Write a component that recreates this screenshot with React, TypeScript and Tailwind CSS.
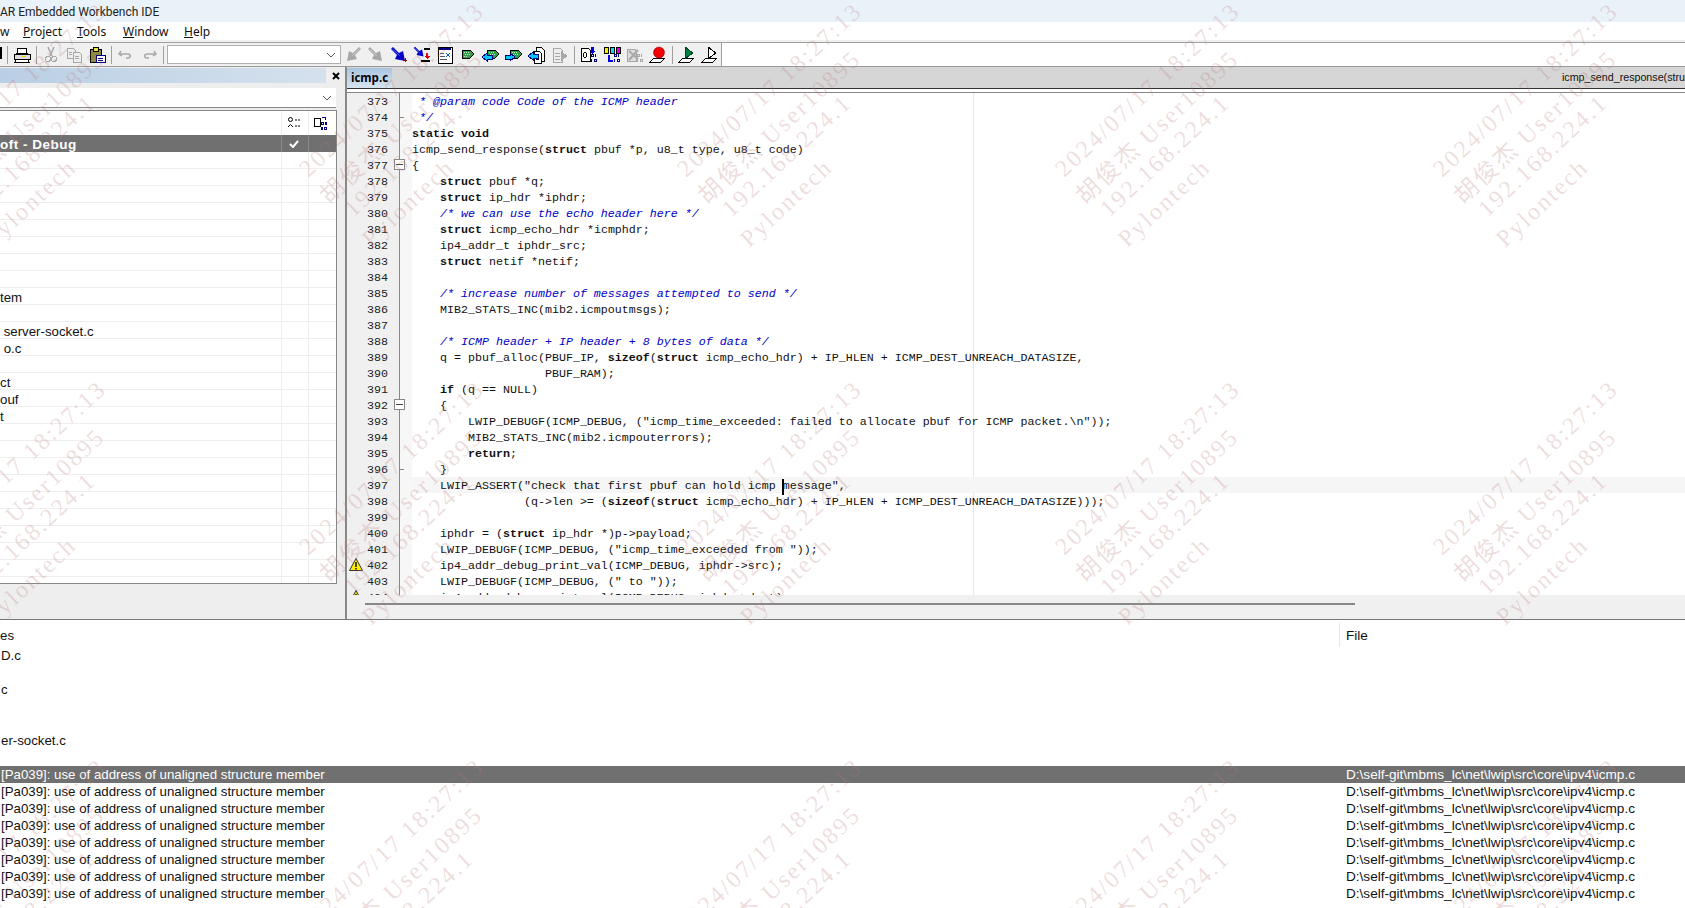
import { ReactNode } from 'react';

const mono = "font-['Liberation_Mono',monospace] text-[11.67px] leading-[18px]";
const ui = "font-['Noto_Sans',sans-serif] text-[12px]";
const listFont = "font-['Liberation_Sans',sans-serif] text-[13.28px]";

const code = [
  ' * @param code Code of the ICMP header',
  ' */',
  'static void',
  'icmp_send_response(struct pbuf *p, u8_t type, u8_t code)',
  '{',
  '    struct pbuf *q;',
  '    struct ip_hdr *iphdr;',
  '    /* we can use the echo header here */',
  '    struct icmp_echo_hdr *icmphdr;',
  '    ip4_addr_t iphdr_src;',
  '    struct netif *netif;',
  '',
  '    /* increase number of messages attempted to send */',
  '    MIB2_STATS_INC(mib2.icmpoutmsgs);',
  '',
  '    /* ICMP header + IP header + 8 bytes of data */',
  '    q = pbuf_alloc(PBUF_IP, sizeof(struct icmp_echo_hdr) + IP_HLEN + ICMP_DEST_UNREACH_DATASIZE,',
  '                   PBUF_RAM);',
  '    if (q == NULL)',
  '    {',
  '        LWIP_DEBUGF(ICMP_DEBUG, ("icmp_time_exceeded: failed to allocate pbuf for ICMP packet.\\n"));',
  '        MIB2_STATS_INC(mib2.icmpouterrors);',
  '        return;',
  '    }',
  '    LWIP_ASSERT("check that first pbuf can hold icmp message",',
  '                (q->len >= (sizeof(struct icmp_echo_hdr) + IP_HLEN + ICMP_DEST_UNREACH_DATASIZE)));',
  '',
  '    iphdr = (struct ip_hdr *)p->payload;',
  '    LWIP_DEBUGF(ICMP_DEBUG, ("icmp_time_exceeded from "));',
  '    ip4_addr_debug_print_val(ICMP_DEBUG, iphdr->src);',
  '    LWIP_DEBUGF(ICMP_DEBUG, (" to "));',
  '    ip4_addr_debug_print_val(ICMP_DEBUG, iphdr->dest);',
];

const treeRows: Record<number, string> = {
  9: 'tem',
  11: ' server-socket.c',
  12: ' o.c',
  14: 'ct',
  15: 'ouf',
  16: 't',
};

const msgTop = ['D.c', '', 'c', '', '', 'er-socket.c', ''];
const message = '[Pa039]: use of address of unaligned structure member';
const path = 'D:\\self-git\\mbms_lc\\net\\lwip\\src\\core\\ipv4\\icmp.c';

function Icon({ children }: { children: ReactNode }) {
  return (
    <div className="flex h-full w-[23px] shrink-0 items-center justify-center">
      <svg width="18" height="18" viewBox="0 0 18 18" shapeRendering="crispEdges">
        {children}
      </svg>
    </div>
  );
}

function Sep({ w }: { w: string }) {
  return (
    <div className={`flex h-full shrink-0 items-center justify-center ${w}`}>
      <div className="h-[18px] w-px bg-[#a0a0a0]" />
    </div>
  );
}

// narrow end top-left, wide head bottom-right
function Torch({ color, light, flip }: { color: string; light: string; flip?: boolean }) {
  return (
    <g transform={flip ? 'translate(18 0) scale(-1 1)' : undefined} shapeRendering="auto">
      <path d="M1 3 L3 1 L9 7 L13 5 L15 15 L5 13 L7 9 Z" fill={color} />
      <path d="M2.5 3 L9.5 9.5" stroke={light} strokeWidth="1" fill="none" />
    </g>
  );
}

function Tag({ x = 5 }: { x?: number }) {
  return (
    <g transform={`translate(${x} 4)`}>
      <path d="M0 0 H8 L12 4 L8 8 H0 Z" fill="#2e9e4a" stroke="#000" />
      <path d="M2 2h1v1h-1zM4 2h1v1h-1zM6 2h1v1h-1zM3 4h1v1h-1zM5 4h1v1h-1zM7 4h1v1h-1zM2 6h1v1h-1zM4 6h1v1h-1z" fill="#c8f0c8" />
    </g>
  );
}

function ArrowL({ y = 7 }: { y?: number }) {
  return <path transform={`translate(0 ${y})`} d="M0 4 L5 0 V2 H10 V6 H5 V8 Z" fill="#00c8ff" stroke="#000080" />;
}

function ArrowR({ y = 7 }: { y?: number }) {
  return <path transform={`translate(0 ${y})`} d="M10 4 L5 0 V2 H0 V6 H5 V8 Z" fill="#00c8ff" stroke="#000080" />;
}

function Bits({ color = '#000080' }: { color?: string }) {
  return (
    <g fill="none" stroke={color}>
      <path d="M11.5 8.5h2v2h-2zM15.5 8v3M11.5 13v3M14.5 13.5h2v2h-2z" />
    </g>
  );
}

function Flag({ children }: { children: ReactNode }) {
  return (
    <g>
      <path d="M5 12 L1 16 H12 L16 12 Z" fill="#fff" stroke="#000" />
      {children}
    </g>
  );
}

function Toolbar() {
  const g = '#a8a8a8';
  return (
    <div className="flex h-6 shrink-0 border-t border-[#a0a0a0] bg-white">
      <div className="flex h-full w-[722px] shrink-0 border-r border-[#a0a0a0] bg-[#f0f0f0]">
        <div className="relative h-full w-[5px] shrink-0">
          <div className="absolute top-1 left-0 h-3 w-0.5 bg-black" />
        </div>
        <Sep w="w-[5px]" />
        <Icon>
          <path d="M5 2h8l1 5H4z" fill="#fff" stroke="#000" />
          <path d="M1 8h16v5H1z" fill="#ddd" stroke="#000" />
          <path d="M8 10h5v1H8z" fill="#e8d800" />
          <path d="M3 13h12l1 3H2z" fill="#fff" stroke="#000" />
        </Icon>
        <Sep w="w-[6px]" />
        <Icon>
          <path d="M6 1 L10 10 M12 1 L8 10" stroke={g} strokeWidth="1.5" fill="none" shapeRendering="auto" />
          <circle cx="6" cy="13" r="2.5" stroke={g} fill="none" />
          <circle cx="12" cy="13" r="2.5" stroke={g} fill="none" />
        </Icon>
        <Icon>
          <path d="M2 2h6l2 2v8H2z" fill="#eee" stroke={g} />
          <path d="M8 6h6l2 2v8H8z" fill="#eee" stroke={g} />
          <path d="M10 10h4M10 12h4M4 6h3M4 8h3" stroke={g} />
        </Icon>
        <Icon>
          <path d="M2 3h11v13H2z" fill="#8c8a3c" stroke="#000" />
          <path d="M5 1h5v4H5z" fill="#e8e040" stroke="#000" />
          <path d="M8 9h9v7H8z" fill="#fff" stroke="#000080" />
          <path d="M10 12h5v1h-5zM10 14h5v1h-5z" fill="#000080" />
        </Icon>
        <Sep w="w-[6px]" />
        <Icon>
          <path d="M4 5 L2 8 L5 10 M3 8 H11 C14 8 14 12 11 12 H9" stroke={g} strokeWidth="1.5" fill="none" shapeRendering="auto" />
        </Icon>
        <Icon>
          <path d="M14 5 L16 8 L13 10 M15 8 H7 C4 8 4 12 7 12 H9" stroke={g} strokeWidth="1.5" fill="none" shapeRendering="auto" />
        </Icon>
        <Sep w="w-[7px]" />
        <div className="my-0.5 flex w-[174px] shrink-0 items-center justify-end border border-[#b0b0b0] bg-white pr-1">
          <svg width="10" height="6" viewBox="0 0 10 6">
            <path d="M1 1 L5 5 L9 1" stroke="#555" fill="none" />
          </svg>
        </div>
        <Icon><Torch color="#a8a8a8" light="#d0d0d0" flip /></Icon>
        <Icon><Torch color="#a8a8a8" light="#d0d0d0" /></Icon>
        <Icon>
          <Torch color="#0000c8" light="#5070ff" />
          <path d="M13 14h4M15 12v4" stroke="#a00000" />
        </Icon>
        <Icon>
          <g transform="scale(.7)"><Torch color="#0000c8" light="#5070ff" /></g>
          <path d="M11 3h6M8 15h9" stroke="#000" strokeWidth="2" />
          <path d="M13 7v3h-2l3 3 3-3h-2V7z" fill="#e00000" />
        </Icon>
        <Icon>
          <path d="M2 1h14v16H2z" fill="#fff" stroke="#000" />
          <path d="M3 2h12v2H3z" fill="#000080" />
          <path d="M4 7h4M4 10h5M4 13h7" stroke="#555" />
          <path d="M10 7 L14 11 M14 7 L10 11" stroke="#0060d0" />
        </Icon>
        <Icon><Tag x={3} /></Icon>
        <Icon>
          <Tag />
          <ArrowL />
        </Icon>
        <Icon>
          <Tag />
          <ArrowR />
        </Icon>
        <Icon>
          <path d="M8 1h5l3 3v11H8z" fill="#fff" stroke="#000" />
          <path d="M6 5h5l2 2v10H6z" fill="#fff" stroke="#000" />
          <path d="M8 9h3M8 11h3M8 13h3" stroke="#000" />
          <ArrowL y={6} />
        </Icon>
        <Icon>
          <path d="M2 2h7l2 2v12H2z" fill="#eee" stroke={g} />
          <path d="M4 7h5M4 10h5M4 13h5" stroke={g} />
          <path d="M10 5 L17 10 L10 15 Z" fill={g} />
        </Icon>
        <Sep w="w-[6px]" />
        <Icon>
          <path d="M1 2h7l2 2v11H1z" fill="#fff" stroke="#000" />
          <path d="M3 7h1v4h-1zM6 7h1v4h-1zM4 6h2v1H4zM4 11h2v1H4z" fill="#000" />
          <path d="M10 1h3v5h3l-4 4-4-4h2z" fill="#0000e0" transform="scale(.8) translate(4 0)" />
          <Bits />
        </Icon>
        <Icon>
          <path d="M1 1h4v6H1z" fill="#f0f000" stroke="#000" />
          <path d="M7 1h4v6H7z" fill="#00e0e0" stroke="#000" />
          <path d="M13 1h4v6h-4z" fill="#e000e0" stroke="#000" />
          <path d="M6 9v6h4" stroke="#0000e0" fill="none" strokeWidth="2" />
          <Bits />
        </Icon>
        <Icon>
          <path d="M1 3h8l1 2v10H1z" fill="#ddd" stroke={g} />
          <path d="M3 5 L12 13 M12 4 L3 14" stroke={g} strokeWidth="2" shapeRendering="auto" />
          <Bits color={g} />
        </Icon>
        <Icon>
          <Flag>
            <circle cx="10" cy="6.5" r="5.5" fill="#f00000" stroke="#800000" strokeWidth="0.5" shapeRendering="auto" />
          </Flag>
        </Icon>
        <Sep w="w-[6px]" />
        <Icon>
          <Flag>
            <path d="M7 1 L15 7 L7 13 Z" fill="#008040" stroke="#004020" />
          </Flag>
        </Icon>
        <Icon>
          <Flag>
            <path d="M7 1 L15 7 L7 13 Z" fill="#fff" stroke="#000" />
          </Flag>
        </Icon>
      </div>
    </div>
  );
}

function TreeRow({ text, selected }: { text?: string; selected?: boolean }) {
  return (
    <div className={`flex h-[17px] shrink-0 leading-[19px] ${selected ? 'bg-[#707070]' : 'border-b border-[#eeeeee]'}`}>
      <div className={`w-[281px] shrink-0 overflow-hidden whitespace-pre ${selected ? "text-[13.5px] font-bold tracking-[0.5px] text-white" : 'text-[#111]'}`}>
        {text}
      </div>
      <div className={`flex w-[27px] shrink-0 items-center justify-center border-l pr-[3px] ${selected ? 'border-[#8c8c8c]' : 'border-[#eeeeee]'}`}>
        {selected && (
          <svg width="10" height="8" viewBox="0 0 10 8">
            <path d="M1 4 L4 7 L9 1" stroke="#fff" strokeWidth="2" fill="none" />
          </svg>
        )}
      </div>
      <div className={`flex-1 border-l ${selected ? 'border-[#8c8c8c]' : 'border-[#eeeeee]'}`} />
    </div>
  );
}

function LeftPanel() {
  return (
    <div className="flex w-[345px] shrink-0 flex-col bg-[#eeeeee]">
      <div className="mt-px flex h-[15px] shrink-0">
        <div className="w-[326px] bg-gradient-to-r from-[#bacfe5] to-[#d5e1ed]" />
        <div className="flex flex-1 items-center justify-center">
          <svg width="8" height="8" viewBox="0 0 8 8">
            <path d="M1 1 L7 7 M7 1 L1 7" stroke="#000" strokeWidth="2" />
          </svg>
        </div>
      </div>
      <div className="mt-[5px] flex h-5 w-[336px] shrink-0 items-center justify-end border-b border-[#888] bg-white pr-1">
        <svg width="10" height="6" viewBox="0 0 10 6">
          <path d="M1 1 L5 5 L9 1" stroke="#555" fill="none" />
        </svg>
      </div>
      <div className={`mt-0.5 flex h-[474px] w-[337px] shrink-0 flex-col overflow-hidden border-t border-r border-b border-[#888] bg-white ${listFont}`}>
        <div className="flex h-6 shrink-0">
          <div className="w-[281px]" />
          <div className="flex w-[27px] items-center justify-center border-l border-[#eeeeee] pr-[3px]">
            <svg width="14" height="14" viewBox="0 0 14 14">
              <circle cx="3.5" cy="3.5" r="2" fill="none" stroke="#000" />
              <path d="M8 4h5M8 10h5" stroke="#000" strokeDasharray="2 1" />
              <path d="M1 11 L3.5 8.5 L6 11" stroke="#000" fill="none" />
            </svg>
          </div>
          <div className="flex flex-1 items-center border-l border-[#eeeeee] pl-1">
            <svg width="14" height="14" viewBox="0 0 14 14" shapeRendering="crispEdges">
              <path d="M1 2h6v8H1z" fill="#fff" stroke="#000" />
              <path d="M9 1h3M12 1v3" stroke="#0000a0" />
              <path d="M8 6h2v2H8zM12 6h1v2h-1zM8 11h1v2H8zM11 11h2v2h-2z" fill="none" stroke="#000080" />
            </svg>
          </div>
        </div>
        <TreeRow text="oft - Debug" selected />
        {Array.from({ length: 25 }, (_, i) => (
          <TreeRow key={i} text={treeRows[i + 1]} />
        ))}
        <div className="flex flex-1">
          <div className="w-[281px]" />
          <div className="w-[27px] border-l border-[#eeeeee]" />
          <div className="flex-1 border-l border-[#eeeeee]" />
        </div>
      </div>
    </div>
  );
}

function Warn() {
  return (
    <svg width="14" height="13" viewBox="0 0 14 13">
      <path d="M7 0.5 L13.5 12.5 H0.5 Z" fill="#ffee00" stroke="#333" />
      <path d="M6.3 4h1.4v5H6.3zM6.3 10h1.4v1.4H6.3z" fill="#000" />
    </svg>
  );
}

function GutterRow({ n }: { n: number }) {
  return (
    <div className="relative h-4 shrink-0 pr-[11px] text-right text-[#222]">
      {(n === 402 || n === 404) && (
        <div className="absolute top-px left-0.5">
          <Warn />
        </div>
      )}
      {n}
      {(n === 377 || n === 392) && (
        <div className="absolute top-[2px] right-[-6px] z-10 flex h-[11px] w-[11px] items-center justify-center border border-[#888] bg-white">
          <div className="h-px w-[7px] bg-[#444]" />
        </div>
      )}
      {(n === 374 || n === 396) && <div className="absolute top-2 right-[-5px] z-10 h-px w-[5px] bg-[#888]" />}
    </div>
  );
}

function CodeLine({ text, active }: { text: string; active: boolean }) {
  const trimmed = text.trim();
  const comment = trimmed.startsWith('/*') || trimmed.startsWith('*');
  if (comment) {
    return <div className="h-4 whitespace-pre text-[#0000c8] italic">{text}</div>;
  }
  if (active) {
    const cut = text.indexOf('message');
    return (
      <div className="h-4 bg-[#f6f6f6] whitespace-pre text-[#111]">
        {text.slice(0, cut)}
        <span className="relative">
          <span className="absolute top-0 -left-px h-4 w-0.5 bg-black" />
        </span>
        {text.slice(cut)}
      </div>
    );
  }
  const parts = text.split(/\b(struct|static|void|sizeof|if|return)\b/);
  return (
    <div className="h-4 whitespace-pre text-[#111]">
      {parts.map((p, i) => (i % 2 ? <b key={i}>{p}</b> : p))}
    </div>
  );
}

function Editor() {
  return (
    <div className="flex min-w-0 flex-1 flex-col border-l-2 border-[#888]">
      <div className="flex h-[22px] shrink-0 items-end justify-between overflow-hidden border-b border-[#333] bg-[#d6d6d6]">
        <div className="flex h-5 w-[45px] items-center justify-center bg-gradient-to-b from-[#a9c4e0] to-[#d8e4f0] font-['Open_Sans',sans-serif] text-[11.5px] font-bold text-black">
          icmp.c
        </div>
        <div className="h-full w-[123px] whitespace-nowrap font-['Liberation_Sans',sans-serif] text-[10.7px] leading-[20px] text-[#111]">
          icmp_send_response(struct pbuf
        </div>
      </div>
      <div className="h-[3px] shrink-0 bg-white" />
      <div className={`flex h-[503px] shrink-0 overflow-hidden border-t border-[#888] bg-white ${mono}`}>
        <div className="flex w-[53px] shrink-0 flex-col border-r border-[#888] bg-[#f0f0f0]">
          {code.map((_, i) => (
            <GutterRow key={i} n={373 + i} />
          ))}
        </div>
        <div className="w-3 shrink-0 bg-[#f7f7f7]" />
        <div className="relative min-w-0 flex-1">
          <div className="absolute top-0 bottom-0 left-[561px] w-px bg-[#e6e6e6]" />
          <div className="relative">
            {code.map((t, i) => (
              <CodeLine key={i} text={t} active={i === 24} />
            ))}
          </div>
        </div>
      </div>
      <div className="flex-1 bg-[#f0f0f0]">
        <div className="mt-2 ml-[18px] h-0.5 w-[990px] bg-[#888]" />
      </div>
    </div>
  );
}

function Messages() {
  return (
    <div className={`flex-1 overflow-hidden bg-white leading-[17px] text-[#111] ${listFont}`}>
      <div className="mt-[3px] flex h-6 items-center">
        <div className="w-[1339px]">es</div>
        <div className="self-stretch border-l border-[#e4e4e4] pl-1.5 text-[13.58px] leading-[26px]">File</div>
      </div>
      {msgTop.map((t, i) => (
        <div key={i} className="h-[17px] pl-px">
          {t}
        </div>
      ))}
      {Array.from({ length: 8 }, (_, i) => (
        <div key={i} className={`flex h-[17px] ${i === 0 ? 'bg-[#707070] text-white' : ''}`}>
          <div className="w-[1346px] pl-px">{message}</div>
          <div className="whitespace-nowrap text-[13.58px]">{path}</div>
        </div>
      ))}
    </div>
  );
}

function Watermarks() {
  const lines = [
    { text: '2024/07/17 18:27:13', dx: 0, dy: 0 },
    { text: '胡俊杰 User10895', dx: 21, dy: 27 },
    { text: '192.168.224.1', dx: 45, dy: 40 },
    { text: 'Pylontech', dx: 63, dy: 70 },
  ];
  const cols = [-67, 311, 689, 1067, 1445];
  const rows = [181, 559, 937];
  return (
    <div className="pointer-events-none absolute inset-0 z-20 overflow-hidden font-['Liberation_Serif','Noto_Sans_CJK_SC',serif] text-[24px] leading-none tracking-[2.2px] text-[#b87878]/25">
      {rows.flatMap((y) =>
        cols.flatMap((x) =>
          lines.map((l) => (
            <div
              key={`${x}-${y}-${l.text}`}
              className="absolute origin-bottom-left -rotate-[43deg] whitespace-pre"
              style={{ left: x + l.dx, top: y + l.dy - 24 }}
            >
              {l.text}
            </div>
          )),
        ),
      )}
    </div>
  );
}

export default function App() {
  return (
    <div className="relative flex h-screen w-screen flex-col overflow-hidden bg-white">
      <div className="flex h-[22px] shrink-0 items-center bg-[#eaf2f9] pt-px font-['Roboto',sans-serif] text-[12px] text-[#222]">AR Embedded Workbench IDE</div>
      <div className={`flex h-[18px] shrink-0 items-center bg-white pt-0.5 text-[#111] ${ui}`}>
        <span className="w-[23px]">w</span>
        <span className="w-[54px]"><u>P</u>roject</span>
        <span className="w-[46px]"><u>T</u>ools</span>
        <span className="w-[61px]"><u>W</u>indow</span>
        <span><u>H</u>elp</span>
      </div>
      <div className="h-0.5 shrink-0 bg-[#f0f0f0]" />
      <Toolbar />
      <div className="flex h-[554px] shrink-0 border-y border-[#777] border-t-[#999]">
        <LeftPanel />
        <Editor />
      </div>
      <Messages />
      <Watermarks />
    </div>
  );
}
